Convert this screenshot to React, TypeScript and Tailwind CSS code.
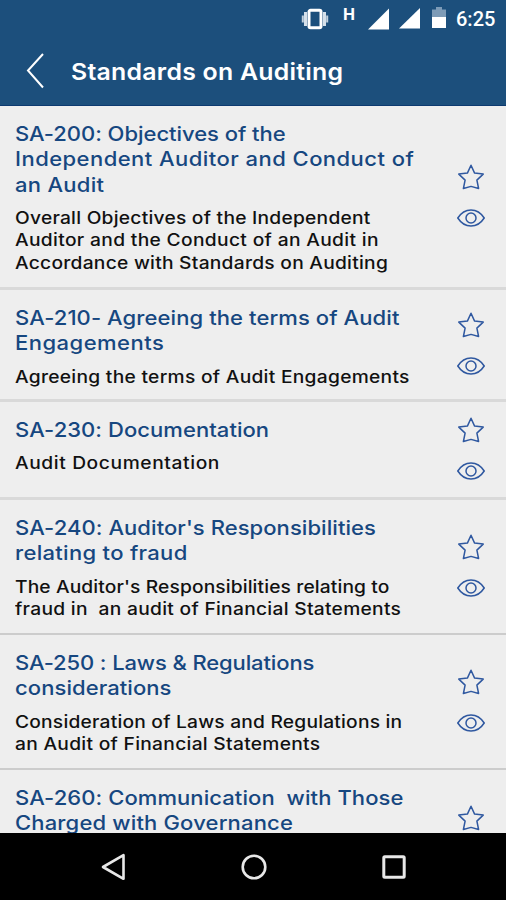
type Line = { text: string; tracking: string };

type Standard = {
  id: string;
  row: string;
  title: Line[];
  summary: Line[];
};

const standards: Standard[] = [
  {
    id: 'SA-200',
    row: 'h-[184px] border-b-[3px] border-[#d9d9d9]',
    title: [
      { text: 'SA-200: Objectives of the', tracking: 'tracking-[-0.04px]' },
      { text: 'Independent Auditor and Conduct of', tracking: 'tracking-[0.41px]' },
      { text: 'an Audit', tracking: 'tracking-[0.25px]' },
    ],
    summary: [
      { text: 'Overall Objectives of the Independent', tracking: 'tracking-[0.21px]' },
      { text: 'Auditor and the Conduct of an Audit in', tracking: 'tracking-[0.29px]' },
      { text: 'Accordance with Standards on Auditing', tracking: 'tracking-[0.22px]' },
    ],
  },
  {
    id: 'SA-210',
    row: 'h-[112px] border-b-[3px] border-[#d9d9d9]',
    title: [
      { text: 'SA-210- Agreeing the terms of Audit', tracking: 'tracking-[0.08px]' },
      { text: 'Engagements', tracking: 'tracking-[0.44px]' },
    ],
    summary: [{ text: 'Agreeing the terms of Audit Engagements', tracking: 'tracking-[0.24px]' }],
  },
  {
    id: 'SA-230',
    row: 'h-[98px] border-b-[3px] border-[#d9d9d9]',
    title: [{ text: 'SA-230: Documentation', tracking: 'tracking-[0.05px]' }],
    summary: [{ text: 'Audit Documentation', tracking: 'tracking-[0.53px]' }],
  },
  {
    id: 'SA-240',
    row: 'h-[135px] border-b-2 border-[#cccccc]',
    title: [
      { text: "SA-240: Auditor's Responsibilities", tracking: 'tracking-[0.06px]' },
      { text: 'relating to fraud', tracking: 'tracking-[0.28px]' },
    ],
    summary: [
      { text: "The Auditor's Responsibilities relating to", tracking: 'tracking-[0.1px]' },
      { text: 'fraud in  an audit of Financial Statements', tracking: 'tracking-[0.25px]' },
    ],
  },
  {
    id: 'SA-250',
    row: 'h-[135px] border-b-2 border-[#cccccc]',
    title: [
      { text: 'SA-250 : Laws & Regulations', tracking: 'tracking-[-0.11px]' },
      { text: 'considerations', tracking: 'tracking-[0.07px]' },
    ],
    summary: [
      { text: 'Consideration of Laws and Regulations in', tracking: 'tracking-[0.18px]' },
      { text: 'an Audit of Financial Statements', tracking: 'tracking-[0.25px]' },
    ],
  },
  {
    id: 'SA-260',
    row: 'h-[135px]',
    title: [
      { text: 'SA-260: Communication  with Those', tracking: 'tracking-[0.07px]' },
      { text: 'Charged with Governance', tracking: 'tracking-[0.15px]' },
    ],
    summary: [],
  },
];

function StarIcon() {
  return (
    <svg className="h-7 w-7" viewBox="0 0 28 28" fill="none" stroke="#2f58a0" strokeWidth="1.5" strokeLinejoin="round">
      <path d="M14 2.200l3.600 7.900 8.600 1-6.300 6 1.700 8.400L14 23.400l-7.600 2.100 1.700-8.400-6.300-6 8.600-1z" />
    </svg>
  );
}

function EyeIcon() {
  return (
    <svg className="h-[18px] w-7" viewBox="0 0 28 18" fill="none" stroke="#2f58a0" strokeWidth="1.5">
      <path d="M.8 9C4 4 8.500 1 14 1s10 3 13.200 8C24 14 19.500 17 14 17S4 14 .8 9z" />
      <circle cx="14" cy="9" r="5" />
    </svg>
  );
}

function StatusBar() {
  return (
    <div className="flex h-9 items-start justify-end text-white">
      <svg className="mt-2 h-[22px] w-7" viewBox="0 0 28 22" fill="none">
        <path d="M4.500 4v14M23.500 4v14" stroke="#d5e0ea" strokeWidth="3" />
        <path d="M1.800 7.500v7M26.200 7.500v7" stroke="#c3d1de" strokeWidth="2" />
        <rect x="8" y="2.300" width="12" height="17.400" rx="1.500" fill="#1c4f7c" stroke="#fff" strokeWidth="3" />
      </svg>
      <span className="mt-[5px] ml-[14px] w-[13px] font-['Roboto',sans-serif] text-[17px] leading-[18px] font-bold">H</span>
      <svg className="mt-2 ml-3 h-[22px] w-[22px]" viewBox="0 0 22 22" fill="#fff">
        <path d="M0 21.500L21 .5v21z" />
      </svg>
      <svg className="mt-2 ml-[9px] h-[22px] w-[22px]" viewBox="0 0 22 22" fill="#fff">
        <path d="M0 20.500L21 0v20.500z" />
      </svg>
      <svg className="mt-[7px] ml-[11px] h-[22px] w-[14px]" viewBox="0 0 14 22">
        <path d="M4 0h6v2.500h4V11H0V2.500h4z" fill="#7d9bb7" />
        <path d="M0 10h14v11H0z" fill="#fff" />
      </svg>
      <span className="mt-2 mr-[10px] ml-[10px] w-[40px] font-['Roboto',sans-serif] text-[20px] leading-[22px] font-medium">
        6:25
      </span>
    </div>
  );
}

function StandardRow({ standard }: { standard: Standard }) {
  return (
    <li className={`flex shrink-0 ${standard.row}`}>
      <div className="min-w-0 flex-1 pt-4 pl-[15px] whitespace-pre">
        <h2 className="w-max origin-left scale-x-[1.1] text-[20px] leading-[25.3px] font-medium text-[#164780]">
          {standard.title.map((line) => (
            <span key={line.text} className={`block ${line.tracking}`}>
              {line.text}
            </span>
          ))}
        </h2>
        <p className="mt-[9px] w-max origin-left scale-x-[1.13] text-[17px] leading-[22.6px] font-medium text-[#111]">
          {standard.summary.map((line) => (
            <span key={line.text} className={`block ${line.tracking}`}>
              {line.text}
            </span>
          ))}
        </p>
      </div>
      <div className="flex w-[70px] flex-col items-center justify-center gap-[18px] pb-[3px]">
        <StarIcon />
        <EyeIcon />
      </div>
    </li>
  );
}

export default function App() {
  return (
    <div className="flex h-[900px] w-[506px] flex-col overflow-hidden bg-[#eeeeee] font-['Inter',sans-serif]">
      <header className="h-[106px] shrink-0 border-b border-[#0d3a70] bg-[#1c4f7c]">
        <StatusBar />
        <div className="flex h-[70px] items-center">
          <svg className="ml-[26px] h-[38px] w-[18px]" viewBox="0 0 18 38" fill="none" stroke="#fff" strokeWidth="2">
            <path d="M17 2L2 18.500 17 35.500" />
          </svg>
          <h1 className="mt-[2px] ml-[27px] w-max origin-left scale-x-[1.08] text-[23px] leading-[30px] font-semibold tracking-[0.24px] whitespace-pre text-white">
            Standards on Auditing
          </h1>
        </div>
      </header>
      <ul className="flex min-h-0 flex-1 flex-col overflow-hidden">
        {standards.map((standard) => (
          <StandardRow key={standard.id} standard={standard} />
        ))}
      </ul>
      <nav className="flex h-[67px] shrink-0 items-center justify-between bg-black pr-[99px] pl-[100px]">
        <svg className="h-7 w-[26px]" viewBox="0 0 26 28" fill="none" stroke="#e8e8e8" strokeWidth="2.600" strokeLinejoin="round">
          <path d="M23.500 2.200v23.600L3 14z" />
        </svg>
        <svg className="h-[26px] w-[26px]" viewBox="0 0 26 26" fill="none" stroke="#e8e8e8" strokeWidth="2.600">
          <circle cx="13" cy="13" r="11.300" />
        </svg>
        <svg className="h-[26px] w-[26px]" viewBox="0 0 26 26" fill="none" stroke="#e8e8e8" strokeWidth="3">
          <rect x="2.800" y="2.800" width="20.400" height="20.400" rx="1" />
        </svg>
      </nav>
    </div>
  );
}
